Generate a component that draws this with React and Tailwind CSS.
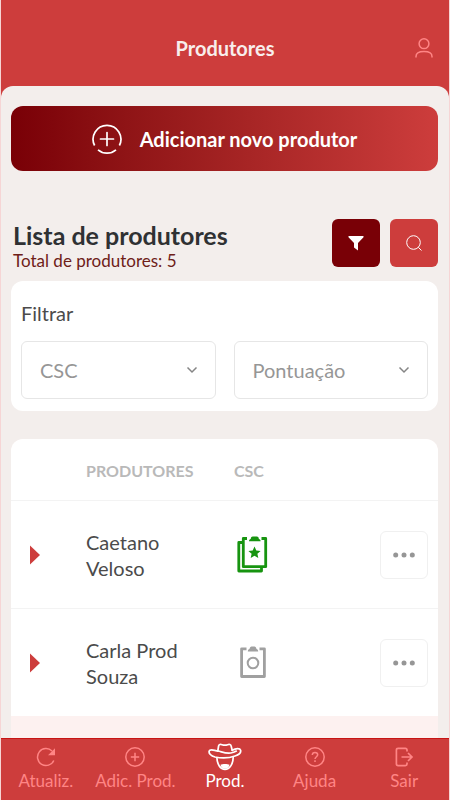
import { useState } from "react";

const producers = [
  { id: 1, name: "Caetano Veloso", approved: true },
  { id: 2, name: "Carla Prod Souza", approved: false },
];

function UserIcon() {
  return (
    <svg width="18" height="20" viewBox="0 0 18 20" fill="none" stroke="currentColor" strokeWidth="1.5">
      <circle cx="9" cy="5.7" r="4.9" />
      <path d="M1 19.5v-1C1 15.6 4 13.6 9 13.6s8 2 8 4.9v1" />
    </svg>
  );
}

function AddRingIcon() {
  return (
    <svg width="30" height="30" viewBox="0 0 30 30" fill="none" stroke="currentColor" strokeWidth="1.7">
      <path d="M2.6 21.5A13.9 13.9 0 1 1 27.4 21.5" />
      <path d="M6 25.8A13.9 13.9 0 0 0 24 25.8" />
      <path d="M15 8.5v13M8.500 15h13" strokeLinecap="round" />
    </svg>
  );
}

function FunnelIcon() {
  return (
    <svg width="16" height="16" viewBox="0 0 16 16" fill="currentColor">
      <path d="M.5 1h15v1.200L10 8v7.600L6 12.600V8L.5 2.200z" />
    </svg>
  );
}

function SearchIcon() {
  return (
    <svg width="18" height="18" viewBox="0 0 18 18" fill="none" stroke="currentColor" strokeWidth="1">
      <circle cx="8.5" cy="8.5" r="6.8" />
      <path d="M13.3 13.3l3.2 3.2" />
    </svg>
  );
}

function ClipboardStarIcon() {
  return (
    <svg width="32" height="38" viewBox="0 0 32 38" fill="none" stroke="currentColor" strokeWidth="2.8" strokeLinejoin="round">
      <path d="M11 3.500H7.300V31.700H29.700V3.500H25.500" />
      <path d="M7 7.500H2.800V36H25.500V32" />
      <path d="M13 6.300c0-1.500.8-2 1.700-2.300.3-1.600 1-2.400 2-2.400h4.200c1 0 1.700.8 2 2.400.9.300 1.700.8 1.700 2.300z" fill="currentColor" stroke="none" />
      <path d="M18.500 11.500l1.800 4 4.300.4-3.200 2.900.9 4.200-3.800-2.200-3.800 2.200.9-4.200-3.200-2.900 4.300-.4z" fill="currentColor" stroke="none" />
    </svg>
  );
}

function ClipboardCircleIcon() {
  return (
    <svg width="26" height="34" viewBox="0 0 26 34" fill="none" stroke="currentColor" strokeWidth="2.8" strokeLinejoin="round">
      <path d="M6.500 3.800H1.600V31.500H24.400V3.800H19.500" />
      <path d="M7.800 6.500c0-1.600.8-2.200 1.700-2.400C9.800 2.500 10.500 1.500 11.500 1.500h3c1 0 1.700 1 2 2.600.9.200 1.700.8 1.700 2.400z" fill="currentColor" stroke="none" />
      <circle cx="13" cy="18" r="5.300" strokeWidth="2" />
    </svg>
  );
}

function RefreshIcon() {
  return (
    <svg width="20" height="20" viewBox="0 0 20 20" fill="none" stroke="currentColor" strokeWidth="1.5">
      <path d="M16 4A8.500 8.500 0 1 0 17.800 13.500" />
      <path d="M12 8.200H19V1.200z" fill="currentColor" stroke="none" />
    </svg>
  );
}

function PlusCircleIcon() {
  return (
    <svg width="20" height="20" viewBox="0 0 20 20" fill="none" stroke="currentColor" strokeWidth="1.5">
      <circle cx="10" cy="10" r="9.2" />
      <path d="M10 5.800v8.400M5.800 10h8.400" />
    </svg>
  );
}

function FarmerIcon() {
  return (
    <svg width="34" height="28" viewBox="0 0 34 28" fill="none" stroke="currentColor" strokeWidth="1.7" strokeLinejoin="round" strokeLinecap="round">
      <path d="M9.800 8L10.600 3C10.900 1.300 12.500 1.200 14 1.700c2 .7 3.800.7 5.600 0 1.600-.6 3.200-.3 3.600 1.500l1 4.100" />
      <path d="M9.800 8C6 7.500 2 5.600 1.200 8 .5 10.400 3 13 7 14c6.500 1.400 14 1.200 20-1 4-1.300 6.200-3.300 5.600-5.700-.6-2.300-4.600-2.400-8.400 0" />
      <path d="M9.800 8c4.200.8 7.200 2.700 13 2 2.500-.3 4-1 5.500-1.900" />
      <path d="M8.900 15c.3 6 3.300 11.400 8.100 11.400s8-5.400 8.200-11.900" />
      <path d="M12.500 21.800c2-1 7-1 9 0-.6 2.600-2.200 3.900-4.500 3.900s-3.900-1.300-4.500-3.900z" fill="currentColor" stroke="none" />
    </svg>
  );
}

function HelpIcon() {
  return (
    <svg width="20" height="20" viewBox="0 0 20 20" fill="none" stroke="currentColor" strokeWidth="1.5">
      <circle cx="10" cy="10" r="9.2" />
      <path d="M7.300 8c0-1.600 1.200-2.600 2.700-2.600s2.700 1 2.700 2.400c0 1.900-2.700 2-2.700 4.200M10 13.300v1.700" />
    </svg>
  );
}

function ExitIcon() {
  return (
    <svg width="20" height="20" viewBox="0 0 20 20" fill="none" stroke="currentColor" strokeWidth="1.7">
      <path d="M13 4.500V3c0-1-.6-1.600-1.600-1.600H4.100C3 1.400 2.400 2 2.400 3v14c0 1 .6 1.600 1.700 1.600h7.300c1 0 1.600-.6 1.600-1.600v-1.500" />
      <path d="M7.500 10h10.300M14 6l4 4-4 4" />
    </svg>
  );
}

const navItems = [
  { label: "Atualiz.", icon: RefreshIcon },
  { label: "Adic. Prod.", icon: PlusCircleIcon },
  { label: "Prod.", icon: FarmerIcon, active: true },
  { label: "Ajuda", icon: HelpIcon },
  { label: "Sair", icon: ExitIcon },
];

function FilterSelect({ label, options }) {
  const [value, setValue] = useState("");

  return (
    <div className="relative flex-1">
      <select
        aria-label={label}
        value={value}
        onChange={(e) => setValue(e.target.value)}
        className="h-[58px] w-full appearance-none rounded-md border border-[#e6e6e6] bg-white pr-10 pl-[18px] text-xl text-[#969696]"
      >
        <option value="">{label}</option>
        {options.map((option) => (
          <option key={option}>{option}</option>
        ))}
      </select>
      <svg className="pointer-events-none absolute top-6 right-[18px]" width="12" height="10" viewBox="0 0 12 10" fill="none" stroke="#858585" strokeWidth="1.5">
        <path d="M1.500 2.500L6 7l4.500-4.500" />
      </svg>
    </div>
  );
}

export default function App() {
  return (
    <div className="flex h-dvh flex-col border-x border-[#f6d5d5] bg-[#cd3d3c] font-['Lato',sans-serif]">
      <header className="grid h-[86px] shrink-0 grid-cols-[1fr_auto_1fr] items-center px-4 pt-[10px]">
        <h1 className="col-start-2 text-xl font-bold text-[#f8eeec]">Produtores</h1>
        <button aria-label="Perfil" className="justify-self-end text-[#ff8585]">
          <UserIcon />
        </button>
      </header>

      <main className="flex min-h-0 flex-1 flex-col overflow-y-auto rounded-t-xl bg-[#f3eeec] pt-5 pr-[11px] pl-[10px]">
        <button className="flex h-[65px] w-full shrink-0 items-center justify-center gap-[18px] rounded-xl bg-linear-to-r from-[#790006] to-[#cd3d3c] text-xl font-bold text-white">
          <AddRingIcon />
          Adicionar novo produtor
        </button>

        <div className="mt-12 flex shrink-0 gap-[10px]">
          <div className="flex-1 pl-[2px]">
            <h2 className="text-[25px] leading-8 font-bold text-[#2f3133]">Lista de produtores</h2>
            <p className="text-[17px] leading-5 text-[#6e2018]">Total de produtores: 5</p>
          </div>
          <button aria-label="Filtrar" className="flex size-12 items-center justify-center rounded-md bg-[#790006] text-white">
            <FunnelIcon />
          </button>
          <button aria-label="Buscar" className="flex size-12 items-center justify-center rounded-md bg-[#cd3d3c] text-white">
            <SearchIcon />
          </button>
        </div>

        <section className="mt-[10px] shrink-0 rounded-xl bg-white px-[10px] pt-5 pb-3">
          <h3 className="text-[20px] leading-6 text-[#4b4b4b]">Filtrar</h3>
          <div className="mt-4 flex gap-[18px]">
            <FilterSelect label="CSC" options={["Sim", "Não"]} />
            <FilterSelect label="Pontuação" options={["Maior", "Menor"]} />
          </div>
        </section>

        <section className="mt-7 flex flex-1 flex-col overflow-hidden rounded-t-xl bg-[#fdf1f0]">
          <table className="w-full table-fixed bg-white text-left">
            <thead>
              <tr className="h-[61px] border-b border-[#f3f3f3] text-base text-[#b9b9b9]">
                <th className="w-[75px]" />
                <th className="w-[148px] pt-1 font-bold">PRODUTORES</th>
                <th className="pt-1 font-bold">CSC</th>
                <th className="w-[58px]" />
              </tr>
            </thead>
            <tbody>
              {producers.map((producer) => (
                <tr key={producer.id} className="h-[108px] border-b border-[#f3f3f3] last:border-b-0">
                  <td className="pt-[2px] pl-[19px]">
                    <button aria-label={`Expandir ${producer.name}`} className="block text-[#cd3d3c]">
                      <svg width="10" height="20" viewBox="0 0 10 20" fill="currentColor">
                        <path d="M0 .5L10 10 0 19.500z" />
                      </svg>
                    </button>
                  </td>
                  <td className="pt-[2px] pr-10 text-[20px] leading-[26px] text-[#4b4b4b]">{producer.name}</td>
                  <td>
                    {producer.approved ? (
                      <div className="pl-[2px] text-[#179410]">
                        <ClipboardStarIcon />
                      </div>
                    ) : (
                      <div className="pl-[6px] text-[#a0a0a0]">
                        <ClipboardCircleIcon />
                      </div>
                    )}
                  </td>
                  <td className="pt-[2px]">
                    <button aria-label="Opções" className="flex size-12 items-center justify-center rounded-md border border-[#f0f0f0] text-[#969696]">
                      <svg width="22" height="6" viewBox="0 0 22 6" fill="currentColor">
                        <circle cx="2.7" cy="3" r="2.5" />
                        <circle cx="11" cy="3" r="2.5" />
                        <circle cx="19.3" cy="3" r="2.5" />
                      </svg>
                    </button>
                  </td>
                </tr>
              ))}
            </tbody>
          </table>
        </section>
      </main>

      <nav className="grid h-[62px] shrink-0 grid-cols-5 border-t border-[#c81414]">
        {navItems.map(({ label, icon: Icon, active }) => (
          <a
            key={label}
            href="#"
            className={`flex flex-col items-center pt-1 text-[17px] leading-5 whitespace-nowrap ${active ? "text-white" : "text-[#ff8585]"}`}
          >
            <span className="flex h-7 items-center">
              <Icon />
            </span>
            {label}
          </a>
        ))}
      </nav>
    </div>
  );
}
